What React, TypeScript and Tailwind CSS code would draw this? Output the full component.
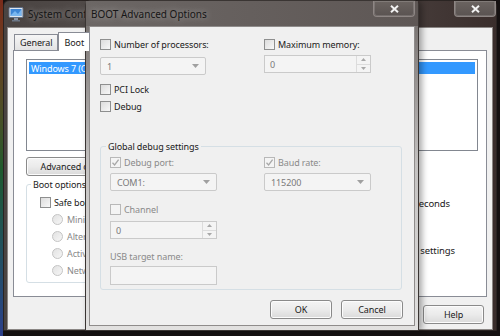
import React from "react";

const font = "font-['Noto_Sans',_'Open_Sans',_sans-serif]";

function Check({ checked = false, disabled = false }: { checked?: boolean; disabled?: boolean }) {
  return (
    <span
      className={`w-[11px] h-[11px] shrink-0 border flex items-center justify-center ${
        disabled ? "border-[#b8b8b8] bg-[#f4f4f4]" : "border-[#8e8f8f] bg-gradient-to-br from-[#dcdcdc] to-[#f8f8f8]"
      }`}
    >
      {checked && (
        <svg width="9" height="9" viewBox="0 0 9 9">
          <path d="M1.5 4.8 L3.6 7 L7.6 1.6" fill="none" stroke="#a8a8a8" strokeWidth="1.3" />
        </svg>
      )}
    </span>
  );
}

function Radio() {
  return <span className="w-[11px] h-[11px] shrink-0 rounded-full border border-[#c4c4c4] bg-gradient-to-br from-[#e2e2e2] to-[#f6f6f6]" />;
}

function Combo({ value, w }: { value: string; w: string }) {
  return (
    <div className={`${w} h-[18px] rounded-[2px] border border-[#cacaca] bg-[#f4f4f4] flex items-center justify-between pl-[6px] pr-[6px] text-[#7a7a7a]`}>
      <span>{value}</span>
      <svg width="7" height="4" viewBox="0 0 7 4">
        <path d="M0 0 H7 L3.5 4 Z" fill="#a0a0a0" />
      </svg>
    </div>
  );
}

function Spin({ value, w }: { value: string; w: string }) {
  return (
    <div className={`${w} h-[18px] border border-[#cacaca] bg-[#f4f4f4] flex items-stretch justify-between text-[#7a7a7a]`}>
      <span className="pl-[5px] flex items-center">{value}</span>
      <div className="w-[14px] flex flex-col border-l border-[#dcdcdc]">
        <div className="flex-1 flex items-center justify-center border-b border-[#dcdcdc]">
          <svg width="5" height="3" viewBox="0 0 5 3"><path d="M0 3 H5 L2.5 0 Z" fill="#a8a8a8" /></svg>
        </div>
        <div className="flex-1 flex items-center justify-center">
          <svg width="5" height="3" viewBox="0 0 5 3"><path d="M0 0 H5 L2.5 3 Z" fill="#a8a8a8" /></svg>
        </div>
      </div>
    </div>
  );
}

function Button({ label, w }: { label: string; w: string }) {
  return (
    <div className={`${w} h-[19px] shrink-0 rounded-[3px] border border-[#8a8a8a] bg-gradient-to-b from-[#f4f4f4] via-[#ebebeb] to-[#dadada] flex items-center justify-center text-[#1a1a1a] shadow-[inset_0_0_0_1px_#fcfcfc]`}>
      {label}
    </div>
  );
}

function CloseBtn() {
  return (
    <div className="w-[42px] h-[16px] rounded-b-[4px] border border-t-0 border-[#8e8684] bg-gradient-to-b from-[#6b6461] to-[#5a5351] flex items-center justify-center shadow-[inset_0_0_0_1px_rgba(255,255,255,0.15)]">
      <svg width="9" height="8" viewBox="0 0 9 8">
        <path d="M1 0.8 L8 7.2 M8 0.8 L1 7.2" stroke="#f2f2f2" strokeWidth="2" />
      </svg>
    </div>
  );
}

export default function App() {
  return (
    <div className={`relative w-[500px] h-[336px] overflow-hidden bg-[#151111] text-[9px] tracking-[-0.1px] leading-none ${font}`}>
      {/* desktop strip on the left */}
      <div className="absolute left-0 top-0 w-[3px] h-full bg-gradient-to-b from-[#7a2b1a] via-[#1f5a2c] to-[#2c3f8a]" />

      {/* System Configuration window (behind) */}
      <div className="absolute left-[3px] top-0 w-[494px] h-[331px] flex flex-col bg-gradient-to-r from-[#4a4442] via-[#5c5654] to-[#3a2e2c] border border-[#2a2422] rounded-t-[6px]">
        <div className="h-[26px] flex items-start justify-between pl-[4px]">
          <div className="flex items-center gap-[4px] pt-[5px]">
            <svg width="16" height="16" viewBox="0 0 16 16">
              <rect x="1" y="1.5" width="14" height="10" rx="1" fill="#dfe6ee" stroke="#5f6f86" />
              <rect x="2.5" y="3" width="11" height="7" fill="#3d86d6" />
              <path d="M3 9 L7 5 L10 8 L13 4 V10 H3 Z" fill="#78b6f0" />
              <rect x="6" y="12" width="4" height="2" fill="#8b96a6" />
              <rect x="4" y="14" width="8" height="1.5" fill="#6b7686" />
            </svg>
            <span className="text-[10px] tracking-[0px] text-[#161616] [text-shadow:0_0_6px_rgba(255,255,255,0.6)]">System Configuration</span>
          </div>
          <CloseBtn />
        </div>
        <div className="mx-[3px] flex-1 bg-[#f0f0f0] border border-[#8a8684] flex flex-col px-[5px] pb-[5px]">
          {/* tabs */}
          <div className="flex items-end h-[22px] pl-[1px]">
            <div className="h-[16px] px-[5px] border border-b-0 border-[#898c95] bg-gradient-to-b from-[#f6f6f6] to-[#e3e3e3] flex items-center text-[#1a1a1a]">General</div>
            <div className="h-[19px] px-[5px] border border-b-0 border-[#898c95] bg-white flex items-center text-[#1a1a1a] -mb-[1px] relative z-10">Boot</div>
          </div>
          <div className="h-[247px] bg-white border border-[#898c95] flex flex-col px-[12px] pt-[8px]">
            <div className="h-[92px] mr-[-4px] border border-[#828790] p-[2px]">
              <div className="h-[12px] bg-[#3399ff] text-white flex items-center pl-[2px]">Windows 7 (C:\Windows) : Current OS; Default OS</div>
            </div>
            <div className="flex mt-[6px] gap-[6px]">
              <Button label="Advanced options..." w="w-[110px]" />
              <Button label="Set as default" w="w-[90px]" />
              <Button label="Delete" w="w-[70px]" />
            </div>
            <div className="flex mt-[8px]">
              <div className="relative w-[220px] h-[99px] border border-[#d5dfe5] rounded-[3px] flex flex-col gap-[6px] pl-[13px] pt-[12px]">
                <span className="absolute left-[4px] -top-[5px] bg-white px-[2px] text-[#1a1a1a]">Boot options</span>
                <div className="flex items-center gap-[3px] text-[#1a1a1a]"><Check /> Safe boot</div>
                <div className="flex flex-col gap-[6px] pl-[12px] text-[#8a8a8a]">
                  <div className="flex items-center gap-[4px]"><Radio /> Minimal</div>
                  <div className="flex items-center gap-[4px]"><Radio /> Alternate shell</div>
                  <div className="flex items-center gap-[4px]"><Radio /> Active Directory repair</div>
                  <div className="flex items-center gap-[4px]"><Radio /> Network</div>
                </div>
              </div>
              <div className="flex-1 flex flex-col text-[#1a1a1a] text-[9.5px]">
                <div className="mt-[11px] flex items-center justify-end gap-[6px] pr-[24px]">
                  <span>Timeout:</span>
                  <span className="w-[40px] h-[18px] border border-[#abadb3]" />
                  <span>seconds</span>
                </div>
                <div className="mt-[32px] flex items-center justify-end gap-[3px] pr-[19px]">
                  <Check /> Make all boot settings
                </div>
              </div>
            </div>
          </div>
          <div className="flex justify-end mt-[8px] pr-[3px]">
            <Button label="Help" w="w-[61px]" />
          </div>
        </div>
      </div>

      {/* BOOT Advanced Options dialog (front) */}
      <div className="absolute left-[85px] top-0 w-[334px] h-[331px] flex flex-col bg-gradient-to-b from-[#6e6866] via-[#c4c2c1] to-[#e2e1e0] border border-[#3a3533] rounded-t-[6px] shadow-[3px_0_6px_rgba(0,0,0,0.35)]">
        <div className="h-[25px] bg-gradient-to-r from-[#6c6765] to-[#5e5755] flex items-start justify-between pl-[5px]">
          <span className="pt-[8px] text-[10px] tracking-[0px] text-[#161616] [text-shadow:0_0_6px_rgba(255,255,255,0.5)]">BOOT Advanced Options</span>
          <div className="pr-[3px]">
            <CloseBtn />
          </div>
        </div>
        <div className="mx-[3px] mb-[4px] flex-1 bg-[#f0f0f0] border border-[#8f8c8b] flex flex-col pl-[10px] pr-[11px] pt-[12px]">
          <div className="grid grid-cols-[164px_107px] text-[#1a1a1a]">
            <div className="flex flex-col">
              <div className="flex items-center gap-[3px] h-[11px]"><Check /> Number of processors:</div>
              <div className="mt-[7px]"><Combo value="1" w="w-[106px]" /></div>
            </div>
            <div className="flex flex-col">
              <div className="flex items-center gap-[3px] h-[11px]"><Check /> Maximum memory:</div>
              <div className="mt-[5px]"><Spin value="0" w="w-[107px]" /></div>
            </div>
          </div>
          <div className="mt-[9px] flex items-center gap-[3px] h-[11px] text-[#1a1a1a]"><Check /> PCI Lock</div>
          <div className="mt-[6px] flex items-center gap-[3px] h-[11px] text-[#1a1a1a]"><Check /> Debug</div>

          <div className="relative mt-[34px] w-[302px] h-[144px] border border-[#d5dfe5] rounded-[3px] flex flex-col pl-[9px] pt-[10px] text-[#8a8a8a]">
            <span className="absolute left-[5px] -top-[5px] bg-[#f0f0f0] px-[2px] text-[#1a1a1a]">Global debug settings</span>
            <div className="grid grid-cols-[154px_107px]">
              <div className="flex flex-col">
                <div className="flex items-center gap-[3px] h-[11px]"><Check checked disabled /> Debug port:</div>
                <div className="mt-[5px]"><Combo value="COM1:" w="w-[107px]" /></div>
              </div>
              <div className="flex flex-col">
                <div className="flex items-center gap-[3px] h-[11px]"><Check checked disabled /> Baud rate:</div>
                <div className="mt-[5px]"><Combo value="115200" w="w-[107px]" /></div>
              </div>
            </div>
            <div className="mt-[13px] flex items-center gap-[3px] h-[11px]"><Check disabled /> Channel</div>
            <div className="mt-[6px]"><Spin value="0" w="w-[107px]" /></div>
            <div className="mt-[12px] h-[11px] flex items-center">USB target name:</div>
            <div className="mt-[4px] w-[107px] h-[19px] border border-[#cacaca] bg-[#f4f4f4]" />
          </div>

          <div className="mt-[10px] flex justify-end gap-[9px]">
            <Button label="OK" w="w-[62px]" />
            <Button label="Cancel" w="w-[62px]" />
          </div>
        </div>
      </div>
    </div>
  );
}
